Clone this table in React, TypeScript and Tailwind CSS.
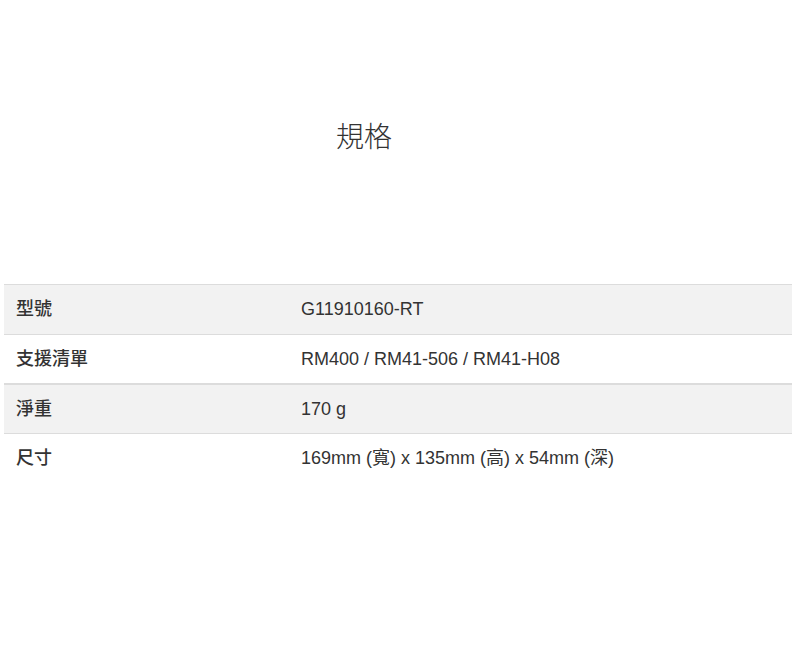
const specs = [
  { label: "型號", value: "G11910160-RT" },
  { label: "支援清單", value: "RM400 / RM41-506 / RM41-H08" },
  { label: "淨重", value: "170 g" },
  { label: "尺寸", value: "169mm (寬) x 135mm (高) x 54mm (深)" },
];

export default function App() {
  return (
    <div className="bg-white w-[800px] h-[645px] text-[#333] font-['Liberation_Sans','Noto_Sans_CJK_TC',sans-serif]">
      <h2 className="pt-[120px] pl-[336px] text-[28px] leading-[36px] font-light">規格</h2>

      {/* tabla de especificaciones */}
      <div className="mt-[128px] ml-[4px] w-[788px] border-b border-transparent">
        {specs.map((s, i) => (
          <div
            key={s.label}
            className={
              i % 2 === 0
                ? "flex h-[50px] items-center bg-[#f2f2f2] border-t border-[#dcdcdc] " + (i === 2 ? "border-t-2" : "")
                : "flex h-[49px] items-center bg-white border-t border-[#dcdcdc]"
            }
          >
            <div className="w-[285px] pl-[12px] text-[18px] font-medium">{s.label}</div>
            <div className="flex-1 pl-[12px] text-[18px]">{s.value}</div>
          </div>
        ))}
      </div>
    </div>
  );
}
